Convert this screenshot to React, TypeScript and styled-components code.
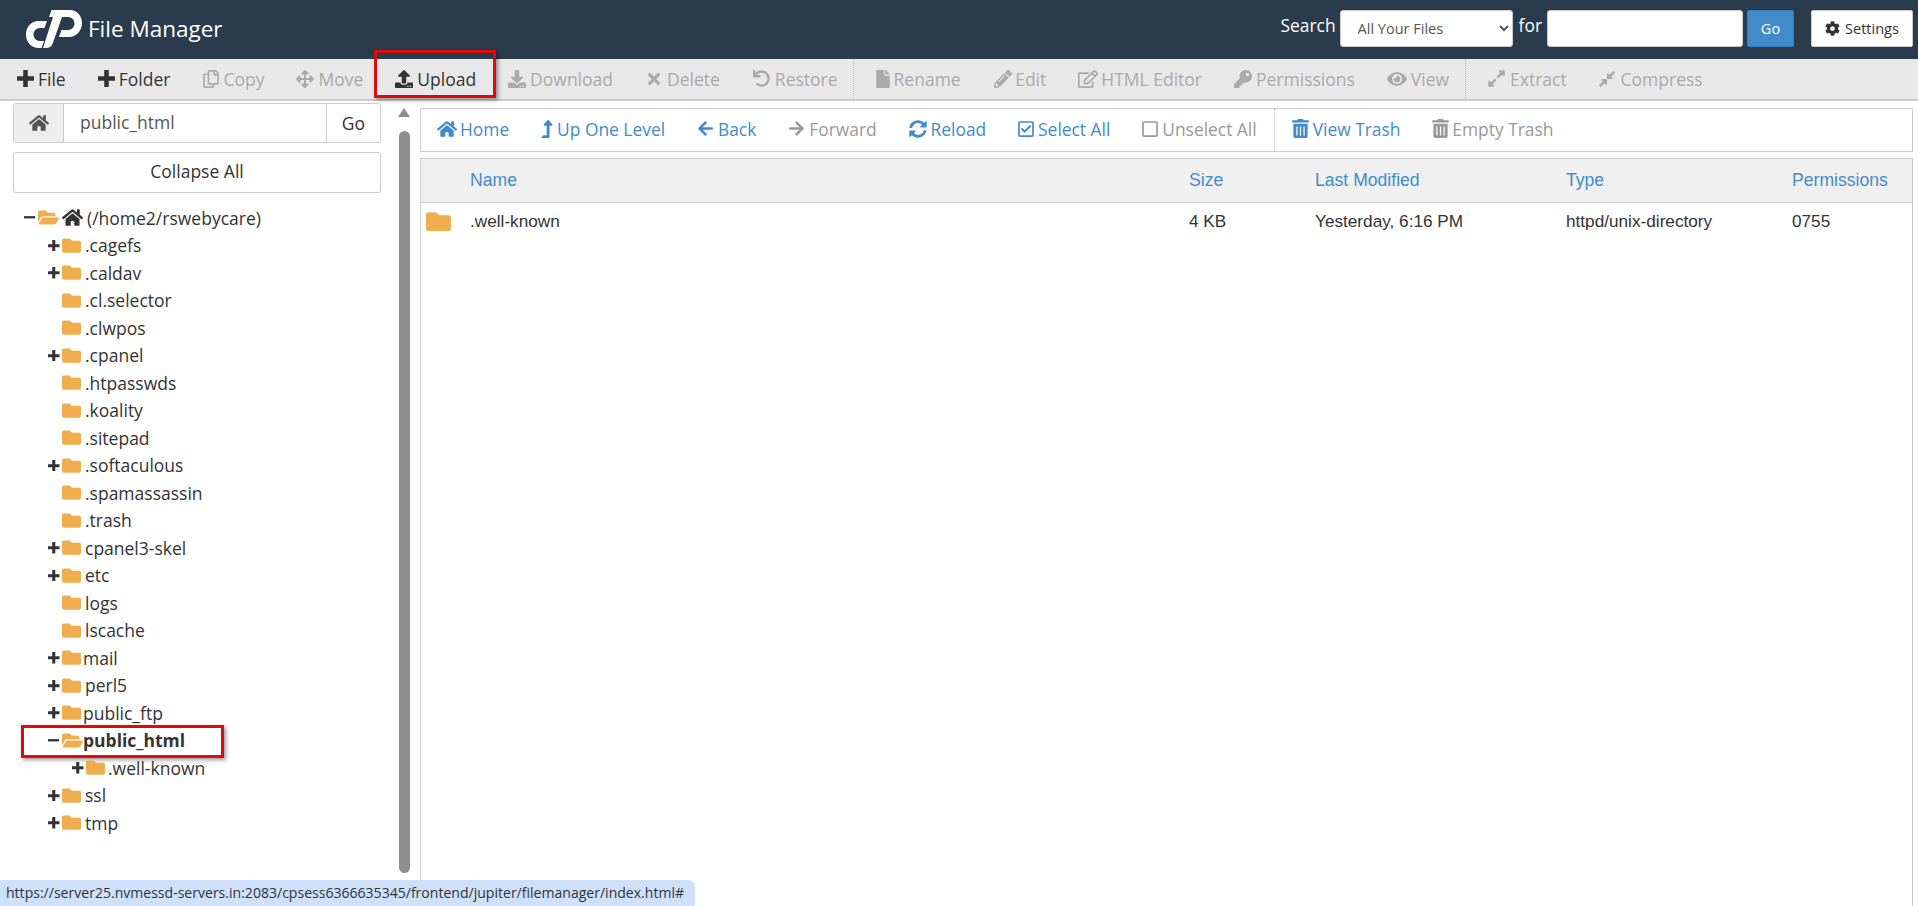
import { createGlobalStyle, styled } from "styled-components";
import type { ReactNode } from "react";
import {
  FaArrowLeft,
  FaArrowRight,
  FaArrowsAlt,
  FaCog,
  FaCompressAlt,
  FaDownload,
  FaExpandAlt,
  FaEye,
  FaFile,
  FaFolder,
  FaFolderOpen,
  FaHome,
  FaKey,
  FaLevelUpAlt,
  FaPencilAlt,
  FaRegCheckSquare,
  FaRegCopy,
  FaRegEdit,
  FaRegSquare,
  FaSyncAlt,
  FaTimes,
  FaTrashAlt,
  FaUndo,
  FaUpload,
} from "react-icons/fa";

const GlobalStyle = createGlobalStyle`
  html, body {
    margin: 0;
    height: 100%;
    background: #fff;
    overflow: hidden;
  }
  body {
    font-family: "Open Sans", "Noto Sans", sans-serif;
    color: #333;
  }
  * {
    box-sizing: border-box;
  }
`;

const Page = styled.div`
  position: relative;
  display: flex;
  flex-direction: column;
  height: 906px;
  overflow: hidden;
`;

const TopBar = styled.header`
  display: flex;
  align-items: center;
  justify-content: space-between;
  flex: 0 0 59px;
  background: #2b3b4e;
  padding: 0 5px 2px 26px;
`;

const Brand = styled.div`
  display: flex;
  align-items: center;
  gap: 6px;
  color: #fff;
  font-size: 22.5px;
`;

const SearchForm = styled.form`
  display: flex;
  align-items: center;
  color: #fff;
  font-size: 17.4px;
  margin: 0;
`;

const SearchLabel = styled.span`
  margin: -8px 4px 0 0;

  &:nth-of-type(2) {
    margin-left: 6px;
    margin-right: 5px;
  }
`;

const SearchSelect = styled.select`
  width: 173px;
  height: 37px;
  border: 1px solid #ccc;
  border-radius: 3px;
  background: #fff;
  color: #555;
  font: 14.5px "Open Sans", sans-serif;
  padding-left: 13px;
`;

const SearchInput = styled.input`
  width: 196px;
  height: 37px;
  border: 1px solid #ccc;
  border-radius: 3px;
  background: #fff;
`;

const GoButton = styled.button`
  width: 47px;
  height: 37px;
  margin: 0 17px 0 4px;
  border: 1px solid #357ebd;
  border-radius: 2px;
  background: #428bca;
  color: #fff;
  font: 14.5px "Open Sans", sans-serif;
`;

const SettingsButton = styled.button`
  display: flex;
  align-items: center;
  justify-content: center;
  gap: 5px;
  width: 102px;
  height: 37px;
  border: 1px solid #ccc;
  border-radius: 2px;
  background: #fff;
  color: #333;
  font: 14.5px "Open Sans", sans-serif;
`;

const ActionBar = styled.nav`
  display: flex;
  align-items: stretch;
  flex: 0 0 42px;
  background: #e8e8e8;
  border-bottom: 2px solid #ccc;
  padding: 0 0 1px 16px;
  font-size: 17.5px;
`;

const ActionItem = styled.div<{ $off?: boolean; $gap?: number }>`
  position: relative;
  display: flex;
  align-items: center;
  margin-right: ${(p) => p.$gap ?? 32}px;
  color: ${(p) => (p.$off ? "#aaa" : "#333")};
  white-space: nowrap;
`;

const IconSlot = styled.span<{ $w: number }>`
  display: flex;
  align-items: center;
  justify-content: center;
  flex: 0 0 ${(p) => p.$w}px;
  width: ${(p) => p.$w}px;
  margin-right: 4px;

  svg {
    flex: none;
  }
`;

const BarDivider = styled.hr<{ $after?: number }>`
  width: 0;
  height: auto;
  margin: 0 ${(p) => p.$after ?? 22}px 0 0;
  border: 0;
  border-left: 1px dotted #b5b5b5;
`;

const RedFrame = styled.span<{ $top: number; $right: number; $bottom: number; $left: number }>`
  position: absolute;
  top: ${(p) => p.$top}px;
  right: ${(p) => p.$right}px;
  bottom: ${(p) => p.$bottom}px;
  left: ${(p) => p.$left}px;
  border: 3px solid #dd0b0b;
  box-shadow: 2px 2px 4px rgba(0, 0, 0, 0.4);
  pointer-events: none;
`;

const Body = styled.main`
  display: grid;
  grid-template-columns: 368px 39px 1fr;
  flex: 1;
  min-height: 0;
  padding: 2px 5px 0 13px;
`;

const LeftColumn = styled.section`
  display: flex;
  flex-direction: column;
  min-width: 0;
`;

const PathGroup = styled.div`
  display: flex;
  flex: 0 0 40px;
  border: 1px solid #ccc;
  border-radius: 3px;
  font-size: 17.5px;
`;

const PathHome = styled.span`
  display: grid;
  place-items: center;
  width: 50px;
  background: #eee;
  color: #555;
  border-right: 1px solid #ccc;
`;

const PathText = styled.span`
  flex: 1;
  padding: 6px 0 0 16px;
  color: #555;
`;

const PathGo = styled.span`
  display: grid;
  place-items: center;
  width: 54px;
  border-left: 1px solid #ccc;
  color: #333;
`;

const CollapseButton = styled.div`
  display: grid;
  place-items: center;
  flex: 0 0 41px;
  margin-top: 9px;
  padding-bottom: 4px;
  border: 1px solid #ccc;
  border-radius: 3px;
  font-size: 17.5px;
`;

const Tree = styled.ul`
  list-style: none;
  margin: 0;
  padding: 11px 0 0 11px;
  font-size: 17.5px;
`;

const TreeRow = styled.li<{ $depth: number; $bold?: boolean }>`
  position: relative;
  display: flex;
  align-items: center;
  height: 27.5px;
  padding-left: ${(p) => p.$depth * 24}px;
  font-weight: ${(p) => (p.$bold ? 700 : 400)};
  color: #333;
`;

const Toggle = styled.span`
  display: grid;
  place-items: center start;
  flex: 0 0 14px;
  width: 14px;
  color: #333;
`;

const FolderIcon = styled.span<{ $open?: boolean }>`
  display: grid;
  place-items: center;
  flex: none;
  width: ${(p) => (p.$open ? 21 : 19)}px;
  color: #f0ad4e;
`;

const RootHome = styled.span`
  display: grid;
  place-items: center;
  width: 22px;
  margin: 0 4px 0 2px;
  color: #333;
`;

const TreeLabel = styled.span<{ $inset: number }>`
  margin-left: ${(p) => p.$inset}px;
  white-space: nowrap;
`;

const ScrollTrack = styled.div`
  display: flex;
  flex-direction: column;
  align-items: center;
  padding: 5px 0 7px 7px;
`;

const ScrollArrow = styled.div`
  width: 0;
  height: 0;
  border-left: 6.5px solid transparent;
  border-right: 6.5px solid transparent;
  border-bottom: 9px solid #8e8e8e;
`;

const ScrollThumb = styled.div`
  width: 11px;
  height: 742px;
  margin-top: 14px;
  background: #8e8e8e;
  border-radius: 6px;
`;

const RightColumn = styled.section`
  display: flex;
  flex-direction: column;
  min-width: 0;
  padding-top: 5px;
`;

const NavBar = styled.div`
  display: flex;
  align-items: stretch;
  flex: 0 0 44px;
  border: 1px solid #ccc;
  padding: 0 0 3px 16px;
  font-size: 17.4px;
`;

const NavItem = styled.div<{ $off?: boolean; $gap?: number }>`
  display: flex;
  align-items: center;
  margin-right: ${(p) => p.$gap ?? 31.9}px;
  color: ${(p) => (p.$off ? "#999" : "#428bca")};
  white-space: nowrap;
`;

const NavDivider = styled(BarDivider)`
  margin: 0 17px -3px 0;
  border-left-color: #c4c4c4;
`;

const FileTable = styled.div`
  flex: 1;
  margin-top: 6px;
  border: 1px solid #ccc;
  border-bottom: 0;
  font-family: "Liberation Sans", Arial, sans-serif;
`;

const fileColumns = "49px 719px 126px 251px 226px 1fr";

const FileHead = styled.div`
  display: grid;
  grid-template-columns: ${fileColumns};
  align-items: center;
  height: 44px;
  background: #f0f0f0;
  border-bottom: 1px solid #ccc;
  color: #428bca;
  font-size: 17.6px;
`;

const FileRow = styled.div`
  display: grid;
  grid-template-columns: ${fileColumns};
  align-items: center;
  height: 36px;
  color: #333;
  font-size: 17.2px;
`;

const RowFolder = styled.span`
  display: grid;
  place-items: center;
  width: 35px;
  color: #f0ad4e;
`;

const StatusBar = styled.div`
  position: absolute;
  left: 0;
  bottom: 0;
  width: 695px;
  height: 26px;
  padding: 3px 0 0 6px;
  background: #cfe0fa;
  border-top-right-radius: 7px;
  color: #333;
  font-size: 14.05px;
  white-space: nowrap;
`;

function Logo() {
  return (
    <svg width="56" height="38" viewBox="0 0 56 38" fill="#fff">
      <path d="M21 11H13C5 11 0 17 0 24.5C0 32 5 38 13 38H15.5L18 31H14C10 31 7.5 28 7.5 24.5C7.5 21 10 18 14 18H18.5Z" />
      <path d="M25.5 0H44C51 0 56 6 56 13C56 21 50 27 43 27H33L35.5 20H42C46 20 48.5 17 48.5 13.5C48.5 10 46 7 42 7H36L26.5 34C25.5 36.5 23 38 20 38H17L27 7H23Z" />
    </svg>
  );
}

function PlusMark({ size }: { size: number }) {
  return (
    <svg width={size} height={size} viewBox="0 0 12 12" fill="currentColor">
      <path d="M4.4 0H7.6V4.4H12V7.6H7.6V12H4.4V7.6H0V4.4H4.4Z" />
    </svg>
  );
}

function MinusMark() {
  return (
    <svg width="11" height="11" viewBox="0 0 12 12" fill="currentColor">
      <path d="M0 4.5H12V7H0Z" />
    </svg>
  );
}

type Action = { icon: ReactNode; slot: number; label: string; off?: boolean; gap?: number };

const actionsA: Action[] = [
  { icon: <PlusMark size={17} />, slot: 18, label: "File" },
  { icon: <PlusMark size={17} />, slot: 17, label: "Folder" },
  { icon: <FaRegCopy size={18} />, slot: 17, label: "Copy", off: true },
  { icon: <FaArrowsAlt size={18} />, slot: 18, label: "Move", off: true },
];

const actionsB: Action[] = [
  { icon: <FaDownload size={18} />, slot: 18, label: "Download", off: true },
  { icon: <FaTimes size={18} />, slot: 18, label: "Delete", off: true },
  { icon: <FaUndo size={17} />, slot: 19, label: "Restore", off: true, gap: 15 },
];

const actionsC: Action[] = [
  { icon: <FaFile size={18} />, slot: 14, label: "Rename", off: true, gap: 33.5 },
  { icon: <FaPencilAlt size={18} />, slot: 17, label: "Edit", off: true },
  { icon: <FaRegEdit size={20} />, slot: 19, label: "HTML Editor", off: true },
  { icon: <FaKey size={18} />, slot: 18, label: "Permissions", off: true },
  { icon: <FaEye size={20} />, slot: 20, label: "View", off: true, gap: 16 },
];

const actionsD: Action[] = [
  { icon: <FaExpandAlt size={19} />, slot: 19, label: "Extract", off: true, gap: 30.8 },
  { icon: <FaCompressAlt size={18} />, slot: 19, label: "Compress", off: true },
];

const navA: Action[] = [
  { icon: <FaHome size={20} />, slot: 19, label: "Home" },
  { icon: <FaLevelUpAlt size={18} />, slot: 12, label: "Up One Level" },
  { icon: <FaArrowLeft size={17} />, slot: 17, label: "Back" },
  { icon: <FaArrowRight size={17} />, slot: 17, label: "Forward", off: true },
  { icon: <FaSyncAlt size={18} />, slot: 18, label: "Reload" },
  { icon: <FaRegCheckSquare size={18} />, slot: 16, label: "Select All" },
  { icon: <FaRegSquare size={18} />, slot: 16, label: "Unselect All", off: true, gap: 17 },
];

const navB: Action[] = [
  { icon: <FaTrashAlt size={19} />, slot: 17, label: "View Trash" },
  { icon: <FaTrashAlt size={19} />, slot: 16, label: "Empty Trash", off: true },
];

type Folder = {
  name: string;
  toggle?: "plus" | "minus";
  depth?: number;
  open?: boolean;
  bold?: boolean;
  inset?: number;
  framed?: boolean;
};

const folders: Folder[] = [
  { name: ".cagefs", toggle: "plus", depth: 1 },
  { name: ".caldav", toggle: "plus", depth: 1 },
  { name: ".cl.selector", depth: 1 },
  { name: ".clwpos", depth: 1 },
  { name: ".cpanel", toggle: "plus", depth: 1 },
  { name: ".htpasswds", depth: 1 },
  { name: ".koality", depth: 1 },
  { name: ".sitepad", depth: 1 },
  { name: ".softaculous", toggle: "plus", depth: 1 },
  { name: ".spamassassin", depth: 1 },
  { name: ".trash", depth: 1 },
  { name: "cpanel3-skel", toggle: "plus", depth: 1 },
  { name: "etc", toggle: "plus", depth: 1 },
  { name: "logs", depth: 1 },
  { name: "lscache", depth: 1 },
  { name: "mail", toggle: "plus", depth: 1, inset: 2 },
  { name: "perl5", toggle: "plus", depth: 1 },
  { name: "public_ftp", toggle: "plus", depth: 1, inset: 2 },
  { name: "public_html", toggle: "minus", depth: 1, open: true, bold: true, inset: 0, framed: true },
  { name: ".well-known", toggle: "plus", depth: 2, inset: 3 },
  { name: "ssl", toggle: "plus", depth: 1 },
  { name: "tmp", toggle: "plus", depth: 1 },
];

function BarAction({ action }: { action: Action }) {
  return (
    <ActionItem $off={action.off} $gap={action.gap}>
      <IconSlot $w={action.slot}>{action.icon}</IconSlot>
      {action.label}
    </ActionItem>
  );
}

function BarLink({ action }: { action: Action }) {
  return (
    <NavItem $off={action.off} $gap={action.gap}>
      <IconSlot $w={action.slot}>{action.icon}</IconSlot>
      {action.label}
    </NavItem>
  );
}

export default function App() {
  return (
    <Page>
      <GlobalStyle />
      <TopBar>
        <Brand>
          <Logo />
          File Manager
        </Brand>
        <SearchForm>
          <SearchLabel>Search</SearchLabel>
          <SearchSelect defaultValue="all">
            <option value="all">All Your Files</option>
          </SearchSelect>
          <SearchLabel>for</SearchLabel>
          <SearchInput />
          <GoButton type="button">Go</GoButton>
          <SettingsButton type="button">
            <FaCog size={15} />
            Settings
          </SettingsButton>
        </SearchForm>
      </TopBar>

      <ActionBar>
        {actionsA.map((a) => (
          <BarAction key={a.label} action={a} />
        ))}
        <ActionItem>
          <IconSlot $w={18}>
            <FaUpload size={18} />
          </IconSlot>
          Upload
          <RedFrame $top={-9} $right={-20} $bottom={0} $left={-21} />
        </ActionItem>
        {actionsB.map((a) => (
          <BarAction key={a.label} action={a} />
        ))}
        <BarDivider />
        {actionsC.map((a) => (
          <BarAction key={a.label} action={a} />
        ))}
        <BarDivider $after={21} />
        {actionsD.map((a) => (
          <BarAction key={a.label} action={a} />
        ))}
      </ActionBar>

      <Body>
        <LeftColumn>
          <PathGroup>
            <PathHome>
              <FaHome size={20} />
            </PathHome>
            <PathText>public_html</PathText>
            <PathGo>Go</PathGo>
          </PathGroup>
          <CollapseButton>Collapse All</CollapseButton>
          <Tree>
            <TreeRow $depth={0}>
              <Toggle>
                <MinusMark />
              </Toggle>
              <FolderIcon $open>
                <FaFolderOpen size={21} />
              </FolderIcon>
              <RootHome>
                <FaHome size={21} />
              </RootHome>
              <span>(/home2/rswebycare)</span>
            </TreeRow>
            {folders.map((f) => (
              <TreeRow key={f.name} $depth={f.depth ?? 0} $bold={f.bold}>
                <Toggle>
                  {f.toggle === "plus" && <PlusMark size={11.5} />}
                  {f.toggle === "minus" && <MinusMark />}
                </Toggle>
                <FolderIcon $open={f.open}>
                  {f.open ? <FaFolderOpen size={21} /> : <FaFolder size={19} />}
                </FolderIcon>
                <TreeLabel $inset={f.inset ?? 4}>{f.name}</TreeLabel>
                {f.framed && <RedFrame $top={-2} $right={157} $bottom={-4} $left={-3} />}
              </TreeRow>
            ))}
          </Tree>
        </LeftColumn>

        <ScrollTrack>
          <ScrollArrow />
          <ScrollThumb />
        </ScrollTrack>

        <RightColumn>
          <NavBar>
            {navA.map((a) => (
              <BarLink key={a.label} action={a} />
            ))}
            <NavDivider />
            {navB.map((a) => (
              <BarLink key={a.label} action={a} />
            ))}
          </NavBar>
          <FileTable>
            <FileHead>
              <span />
              <span>Name</span>
              <span>Size</span>
              <span>Last Modified</span>
              <span>Type</span>
              <span>Permissions</span>
            </FileHead>
            <FileRow>
              <RowFolder>
                <FaFolder size={25} />
              </RowFolder>
              <span>.well-known</span>
              <span>4 KB</span>
              <span>Yesterday, 6:16 PM</span>
              <span>httpd/unix-directory</span>
              <span>0755</span>
            </FileRow>
          </FileTable>
        </RightColumn>
      </Body>

      <StatusBar>
        https://server25.nvmessd-servers.in:2083/cpsess6366635345/frontend/jupiter/filemanager/index.html#
      </StatusBar>
    </Page>
  );
}
